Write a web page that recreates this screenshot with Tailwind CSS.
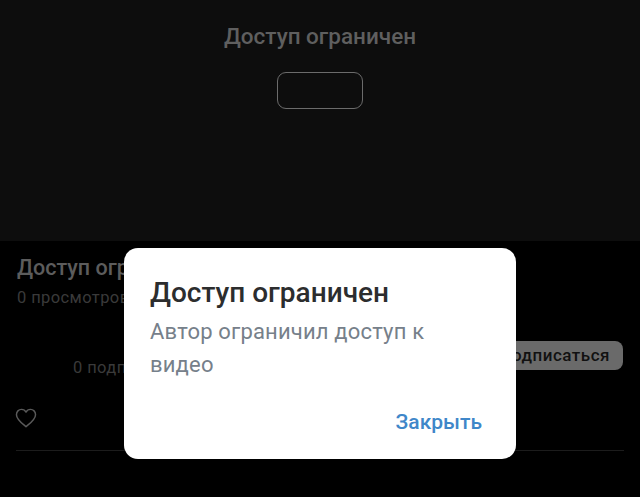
<!DOCTYPE html>
<html lang="ru">
  <head>
    <meta charset="UTF-8" />
    <meta name="viewport" content="width=device-width, initial-scale=1.0" />
    <script src="https://cdn.jsdelivr.net/npm/@tailwindcss/browser@4"></script>
    <title>Доступ ограничен</title>
  </head>
  <body class="bg-black font-['Roboto',sans-serif] h-[497px] w-[640px] overflow-hidden relative">
    <!-- player -->
    <div class="h-[241px] bg-[#0d0d0d] flex flex-col items-center pt-[22px]">
      <h2 class="text-[22.5px] leading-[28px] font-medium text-[#5f5f5f]">Доступ ограничен</h2>
      <div class="mt-[22px] w-[86px] h-[37px] rounded-[9px] border border-[#6b6b6b] -ml-px"></div>
    </div>

    <!-- video info -->
    <div class="px-4">
      <h1 class="pt-[14px] pl-px text-[21.5px] leading-[26px] font-medium text-[#5c5c5c]">Доступ ограничен</h1>
      <p class="mt-[7px] pl-px text-[16.5px] tracking-[0.4px] leading-[20px] text-[#3a3a3a]">0 просмотров</p>
      <div class="mt-[33px] relative flex justify-end h-[29px]">
        <span class="absolute left-[57px] top-[17px] text-[16.5px] tracking-[0.4px] leading-[20px] text-[#3a3a3a]">0 подписчиков</span>
        <button class="h-[29px] px-[13px] mr-px rounded-[8px] bg-[#6a6a6a] text-[#111] text-[17px] font-medium tracking-[0.5px]">Подписаться</button>
      </div>
      <div class="mt-[37px] h-[21px] flex items-center">
        <svg class="w-[22px] h-[20px] -ml-[1px]" viewBox="0 0 24 22" fill="none" stroke="#5a5a5a" stroke-width="1.6" stroke-linejoin="round">
          <path d="M12 20.5 C7 16.5 1.5 12.5 1.5 7.3 C1.5 4 4 1.5 7 1.5 C9 1.5 11 2.6 12 4.5 C13 2.6 15 1.5 17 1.5 C20 1.5 22.5 4 22.5 7.3 C22.5 12.5 17 16.5 12 20.5 Z" />
        </svg>
      </div>
      <div class="mt-[22px] h-px bg-[#1c1c1c]"></div>
    </div>

    <!-- dialog -->
    <div class="absolute left-[124px] top-[248px] w-[392px] h-[211px] bg-white rounded-[14px] pl-[26px] pr-[60px] pt-[28px] flex flex-col">
      <h3 class="text-[28px] leading-[34px] font-medium text-[#2c2d2e]">Доступ ограничен</h3>
      <p class="mt-[5px] text-[22px] tracking-[0.17px] leading-[33px] text-[#76808a]">Автор ограничил доступ к видео</p>
      <button class="mt-auto mb-[24px] -mr-[26px] self-end text-[21px] leading-[26px] font-medium text-[#3f87c9]">Закрыть</button>
    </div>
  </body>
</html>
